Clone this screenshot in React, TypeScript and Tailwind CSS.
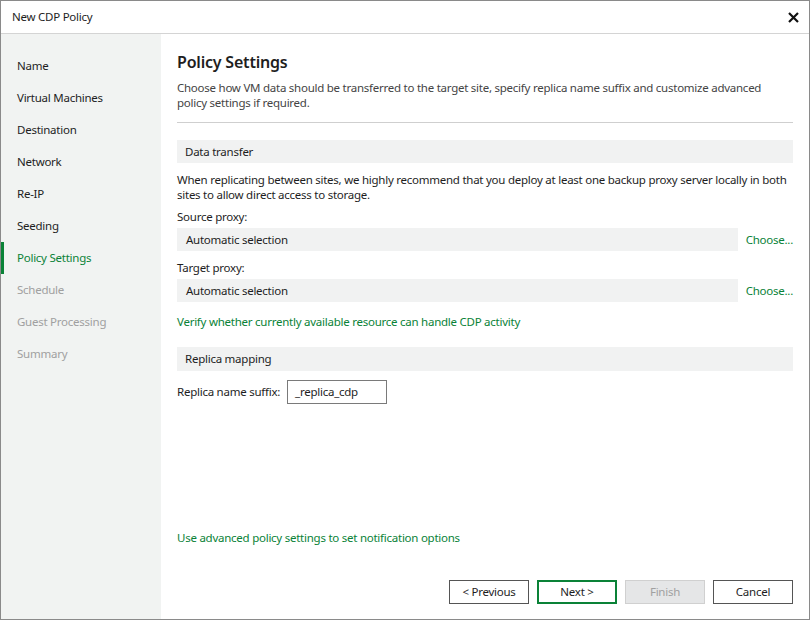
const steps = [
  "Name",
  "Virtual Machines",
  "Destination",
  "Network",
  "Re-IP",
  "Seeding",
  "Policy Settings",
  "Schedule",
  "Guest Processing",
  "Summary",
];

const App = () => {
  return (
    <div className="flex h-[620px] w-[810px] flex-col border border-[#8a8a8a] bg-white font-['Noto_Sans',sans-serif] text-[11.5px] tracking-[-0.25px] text-[#1e1e1e]">
      <header className="flex h-[33px] shrink-0 items-center justify-between border-b border-[#d4d4d4] pl-[11px] pr-[10px]">
        <span>New CDP Policy</span>
        <svg width="11" height="11" viewBox="0 0 11 11">
          <path d="M1 1L10 10M10 1L1 10" stroke="#111" strokeWidth="2.2" />
        </svg>
      </header>
      <div className="flex flex-1">
        <nav className="w-[160px] shrink-0 bg-[#f1f3f2] pt-[16px]">
          {steps.map((s, i) => {
            const active = s === "Policy Settings";
            const disabled = i > 6;
            return (
              <div
                key={s}
                className={`flex h-[32px] items-center border-l-[3px] pl-[13px] ${
                  active ? "border-[#0a8237] text-[#0a8237]" : "border-transparent"
                } ${disabled ? "text-[#a0a0a0]" : ""}`}
              >
                {s}
              </div>
            );
          })}
        </nav>
        <main className="flex flex-1 flex-col pl-[16px] pr-[16px] pt-[16px] pb-[15px]">
          <h1 className="text-[16px] font-semibold leading-[24px] tracking-[-0.2px]">Policy Settings</h1>
          <p className="mt-[6px] leading-[15px] text-[#444]">
            Choose how VM data should be transferred to the target site, specify replica name suffix and customize advanced
            policy settings if required.
          </p>
          <div className="mt-[12px] border-t border-[#cfcfcf]" />
          <div className="mt-[17px] flex h-[23px] items-center bg-[#f1f2f2] pl-[8px]">Data transfer</div>
          <p className="mt-[9px] leading-[15px]">
            When replicating between sites, we highly recommend that you deploy at least one backup proxy server locally in
            both sites to allow direct access to storage.
          </p>
          <div className="mt-[7px] leading-[15px]">Source proxy:</div>
          <div className="mt-[4px] flex items-center gap-[8px]">
            <div className="flex h-[23px] flex-1 items-center bg-[#f1f2f2] pl-[9px]">Automatic selection</div>
            <span className="text-[#0a8237]">Choose...</span>
          </div>
          <div className="mt-[9px] leading-[15px]">Target proxy:</div>
          <div className="mt-[4px] flex items-center gap-[8px]">
            <div className="flex h-[23px] flex-1 items-center bg-[#f1f2f2] pl-[9px]">Automatic selection</div>
            <span className="text-[#0a8237]">Choose...</span>
          </div>
          <div className="mt-[12px] leading-[15px] text-[#0a8237]">
            Verify whether currently available resource can handle CDP activity
          </div>
          <div className="mt-[18px] flex h-[24px] items-center bg-[#f1f2f2] pl-[8px]">Replica mapping</div>
          <div className="mt-[9px] flex items-center gap-[7px]">
            <span>Replica name suffix:</span>
            <div className="flex h-[24px] w-[100px] items-center border border-[#7a7a7a] pl-[7px]">_replica_cdp</div>
          </div>
          <div className="flex-1" />
          <div className="leading-[15px] text-[#0a8237]">Use advanced policy settings to set notification options</div>
          <div className="mt-[35px] flex justify-end gap-[8px]">
            <button className="h-[24px] w-[80px] border border-[#555]">&lt; Previous</button>
            <button className="h-[24px] w-[80px] border-2 border-[#0a8237]">Next &gt;</button>
            <button className="h-[24px] w-[80px] border border-[#d0d0d0] bg-[#e5e6e7] text-[#a0a0a0]">Finish</button>
            <button className="h-[24px] w-[80px] border border-[#555]">Cancel</button>
          </div>
        </main>
      </div>
    </div>
  );
};

export default App;
